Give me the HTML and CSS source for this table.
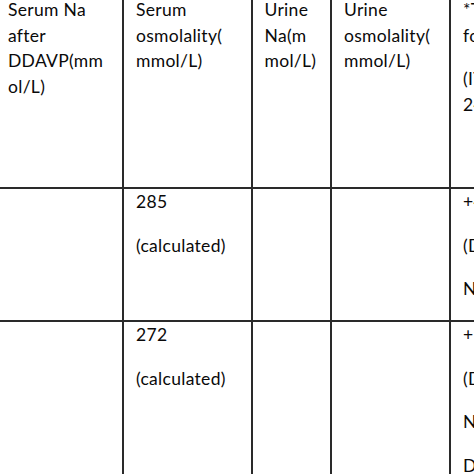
FILE: index.html
```html
<!DOCTYPE html>
<html>
<head>
<meta charset="utf-8">
<link rel="stylesheet" href="styles.css">
</head>
<body>
<div class="page">
<table class="data">
<colgroup>
<col class="c1"><col class="c2"><col class="c3"><col class="c4"><col class="c5">
</colgroup>
<tr class="head">
<td><p>Serum Na<br>after<br>DDAVP(mm<br>ol/L)</p></td>
<td><p>Serum<br>osmolality(<br>mmol/L)</p></td>
<td><p>Urine<br>Na(m<br>mol/L)</p></td>
<td><p>Urine<br>osmolality(<br>mmol/L)</p></td>
<td><p>*Treatment<br>for</p><p>(ITU<br>24 hours)</p></td>
</tr>
<tr class="r2">
<td></td>
<td><p>285</p><p>(calculated)</p></td>
<td></td>
<td></td>
<td><p>+4 L</p><p>(Day 1)</p><p>NaCl</p></td>
</tr>
<tr class="r3">
<td></td>
<td><p>272</p><p>(calculated)</p></td>
<td></td>
<td></td>
<td><p>+5 L</p><p>(Day 2)</p><p>NaCl</p><p>DDAVP</p></td>
</tr>
</table>
</div>
</body>
</html>
```
FILE: styles.css
```css
html, body {
  margin: 0;
  padding: 0;
  background: #ffffff;
}
.page {
  width: 474px;
  height: 474px;
  overflow: hidden;
}
.data {
  border-collapse: collapse;
  table-layout: fixed;
  width: 680px;
  margin: -5px 0 0 -6px;
  font-family: Lato, "Liberation Sans", sans-serif;
  font-size: 17.5px;
  letter-spacing: 0.3px;
  line-height: 25.7px;
  color: #0a0a0a;
}
.c1 { width: 128px; }
.c2 { width: 128.5px; }
.c3 { width: 79.5px; }
.c4 { width: 119px; }
.c5 { width: 225px; }
.data td {
  border: 2px solid #2a2a2a;
  vertical-align: top;
  padding: 0 4px 0 12px;
  white-space: nowrap;
  overflow: hidden;
}
.data p {
  margin: 0 0 17.8px 0;
}
.head { height: 192px; }
.r2 { height: 133px; }
.r3 { height: 220px; }
```
